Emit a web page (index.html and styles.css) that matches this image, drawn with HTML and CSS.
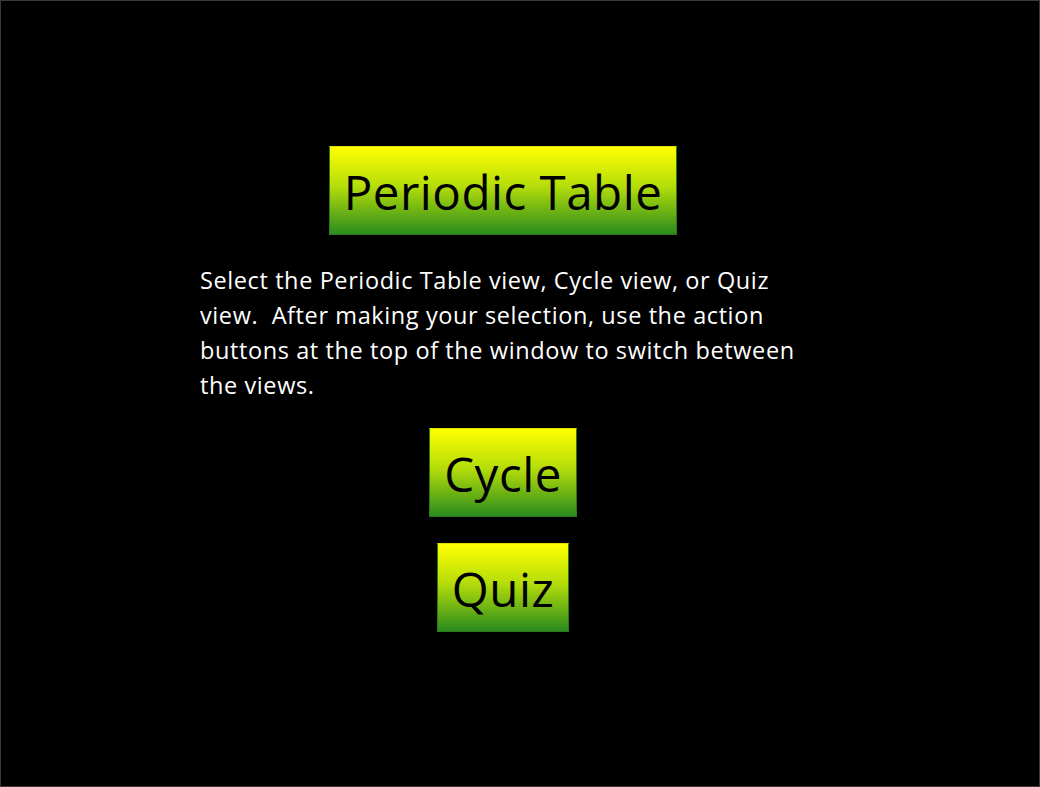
FILE: index.html
```html
<!DOCTYPE html>
<html>
<head>
<meta charset="utf-8">
<link rel="stylesheet" href="styles.css">
</head>
<body>
<div class="window">
  <div class="column">
    <div class="btn">Periodic Table</div>
    <p class="intro">Select the Periodic Table view, Cycle view, or Quiz view.&nbsp; After making your selection, use the action buttons at the top of the window to switch between the views.</p>
    <div class="btn">Cycle</div>
    <div class="btn">Quiz</div>
  </div>
</div>
</body>
</html>
```
FILE: styles.css
```css
html, body {
  margin: 0;
  padding: 0;
  background: #000;
}
.window {
  box-sizing: border-box;
  width: 1040px;
  height: 787px;
  border: 1px solid #3a3a3a;
  background: #000;
  padding-top: 145px;
  padding-left: 199px;
}
.column {
  width: 606px;
  display: flex;
  flex-direction: column;
  align-items: center;
}
.btn {
  box-sizing: border-box;
  height: 89px;
  padding: 3px 14px 0 14px;
  display: flex;
  align-items: center;
  justify-content: center;
  background: linear-gradient(to bottom, #ffff00 0%, #b5dd0a 45%, #2b8c1e 100%);
  border: 1px solid #2a7a1a;
  border-top-color: #e0e000;
  color: #000;
  font-family: "Open Sans", "Noto Sans", sans-serif;
  font-size: 47.5px;
  letter-spacing: 0.5px;
  line-height: 1;
}
.intro {
  align-self: stretch;
  margin: 28px -6px 25px 0;
  color: #fff;
  font-family: "Open Sans", "Noto Sans", sans-serif;
  font-size: 23.5px;
  letter-spacing: 0.6px;
  line-height: 35px;
}
.btn + .btn {
  margin-top: 26px;
}
```
